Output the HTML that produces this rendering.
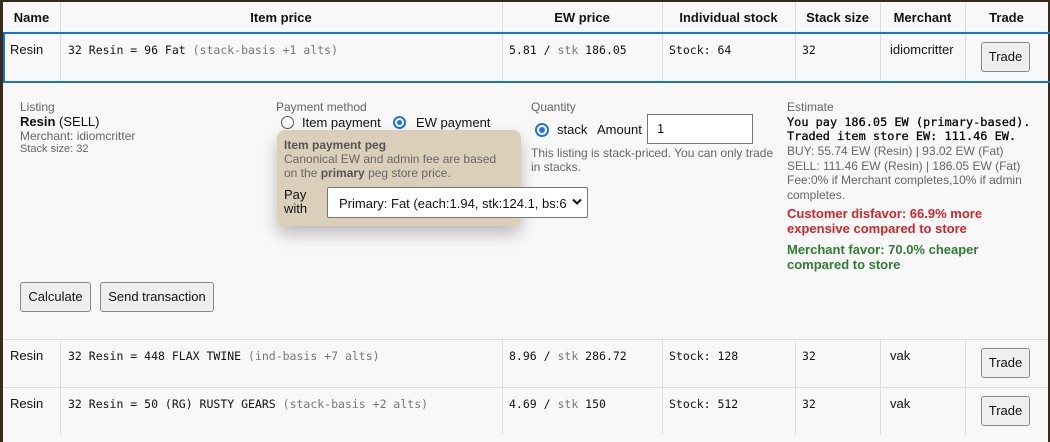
<!DOCTYPE html>
<html><head><style>
*{margin:0;padding:0;box-sizing:border-box}
body{width:1050px;height:435px;overflow:hidden;background:#3a2a18;font-family:"Liberation Sans",Arial,sans-serif;font-size:13px;color:#111;position:relative}
#panel{position:absolute;left:3px;top:2px;width:1045px;height:440px;background:#f8f8f8}
.a{position:absolute;white-space:nowrap}
.m{font-family:"DejaVu Sans Mono",monospace;font-size:11.5px}
.g{color:#777}
.vl{position:absolute;width:1px;background:#dedede}
.hl{position:absolute;height:1px;background:#dedede}
.btn{position:absolute;border:1px solid #8a8a8a;border-radius:3px;background:#efefef;font-size:13px;text-align:center}
.h{font-weight:bold;text-align:center}
.s{color:#666;font-size:12px}
</style></head><body>
<div id="panel"></div>
<div class="a h" style="left:3px;top:10px;width:57px">Name</div>
<div class="a h" style="left:60px;top:10px;width:442px">Item price</div>
<div class="a h" style="left:502px;top:10px;width:160px">EW price</div>
<div class="a h" style="left:662px;top:10px;width:133px">Individual stock</div>
<div class="a h" style="left:795px;top:10px;width:85px">Stack size</div>
<div class="a h" style="left:880px;top:10px;width:85px">Merchant</div>
<div class="a h" style="left:965px;top:10px;width:83px">Trade</div>
<div class="vl" style="left:60px;top:2px;height:81px"></div>
<div class="vl" style="left:502px;top:2px;height:81px"></div>
<div class="vl" style="left:662px;top:2px;height:81px"></div>
<div class="vl" style="left:795px;top:2px;height:81px"></div>
<div class="vl" style="left:880px;top:2px;height:81px"></div>
<div class="vl" style="left:965px;top:2px;height:81px"></div>
<div style="position:absolute;left:3px;top:32px;width:1047px;height:51px;border:2px solid #1a6fd8;border-right:none"></div>
<div class="a" style="left:10px;top:42px">Resin</div>
<div class="a m" style="left:68px;top:43px">32 Resin = 96 Fat <span class="g">(stack-basis +1 alts)</span></div>
<div class="a m" style="left:509px;top:43px">5.81 / <span class="g">stk</span> 186.05</div>
<div class="a m" style="left:669px;top:43px">Stock: 64</div>
<div class="a m" style="left:802px;top:43px">32</div>
<div class="a" style="left:890px;top:42px">idiomcritter</div>
<div class="btn" style="left:981px;top:42px;width:49px;height:30px;line-height:28px">Trade</div>

<div class="a s" style="left:20px;top:100px">Listing</div>
<div class="a" style="left:20px;top:114px"><b>Resin</b> (SELL)</div>
<div class="a s" style="left:20px;top:129px">Merchant: idiomcritter</div>
<div class="a s" style="left:20px;top:143px;font-size:11px">Stack size: 32</div>

<div class="a s" style="left:276px;top:100px">Payment method</div>
<div class="a" style="left:281px;top:116px;width:13px;height:13px;border:1px solid #555;border-radius:50%;background:#fff"></div>
<div class="a" style="left:302px;top:115px">Item payment</div>
<div class="a" style="left:393px;top:116px;width:13px;height:13px;border:2px solid #1a73e8;border-radius:50%;background:#fff"><div style="position:absolute;left:2px;top:2px;width:5px;height:5px;border-radius:50%;background:#1a73e8"></div></div>
<div class="a" style="left:416px;top:115px">EW payment</div>
<div class="a" style="left:277px;top:130px;width:244px;height:96px;border-radius:8px;background:#dccfba;box-shadow:0 8px 16px rgba(0,0,0,0.25)"></div>
<div class="a" style="left:284px;top:138px;font-size:12px;color:#555;font-weight:bold">Item payment peg</div>
<div class="a" style="left:284px;top:152px;font-size:12px;color:#666;line-height:14px">Canonical EW and admin fee are based<br>on the <b style="color:#555">primary</b> peg store price.</div>
<div class="a" style="left:284px;top:188px;line-height:14px">Pay<br>with</div>
<div class="a" style="left:327px;top:187px;width:261px;height:31px;border:1px solid #767676;border-radius:2px;background:#fff;padding:8px 0 0 11px;overflow:hidden"><span style="display:inline-block;width:228px;overflow:hidden">Primary: Fat (each:1.94, stk:124.1, bs:6</span></div>
<svg class="a" style="left:571px;top:197px" width="12" height="10"><path d="M2 2.5 L6 6.5 L10 2.5" stroke="#111" stroke-width="2" fill="none"/></svg>

<div class="a s" style="left:531px;top:100px">Quantity</div>
<div class="a" style="left:535px;top:123px;width:14px;height:14px;border:2px solid #1a73e8;border-radius:50%;background:#fff"><div style="position:absolute;left:2px;top:2px;width:6px;height:6px;border-radius:50%;background:#1a73e8"></div></div>
<div class="a" style="left:557px;top:122px">stack</div>
<div class="a" style="left:597px;top:122px">Amount</div>
<div class="a" style="left:647px;top:114px;width:106px;height:30px;border:1px solid #767676;background:#fff;padding:6px 0 0 9px">1</div>
<div class="a s" style="left:531px;top:146px;line-height:14px">This listing is stack-priced. You can only trade<br>in stacks.</div>

<div class="a s" style="left:787px;top:100px">Estimate</div>
<div class="a m" style="left:787px;top:115px;line-height:14px;color:#000;font-size:11.9px;font-weight:500;-webkit-text-stroke:0.25px #000">You pay 186.05 EW (primary-based).<br>Traded item store EW: 111.46 EW.</div>
<div class="a s" style="left:787px;top:144px;line-height:14.5px">BUY: 55.74 EW (Resin) | 93.02 EW (Fat)<br>SELL: 111.46 EW (Resin) | 186.05 EW (Fat)<br>Fee:0% if Merchant completes,10% if admin<br>completes.</div>
<div class="a" style="left:787px;top:206px;line-height:15px;color:#d0262a;font-weight:bold">Customer disfavor: 66.9% more<br>expensive compared to store</div>
<div class="a" style="left:787px;top:242px;line-height:15px;color:#2e7d32;font-weight:bold">Merchant favor: 70.0% cheaper<br>compared to store</div>

<div class="btn" style="left:20px;top:282px;width:71px;height:30px;line-height:28px">Calculate</div>
<div class="btn" style="left:100px;top:282px;width:114px;height:30px;line-height:28px">Send transaction</div>

<div class="hl" style="left:3px;top:339px;width:1045px"></div>
<div class="hl" style="left:3px;top:387px;width:1045px"></div>
<div class="vl" style="left:60px;top:339px;height:96px"></div>
<div class="vl" style="left:502px;top:339px;height:96px"></div>
<div class="vl" style="left:662px;top:339px;height:96px"></div>
<div class="vl" style="left:795px;top:339px;height:96px"></div>
<div class="vl" style="left:880px;top:339px;height:96px"></div>
<div class="vl" style="left:965px;top:339px;height:96px"></div>

<div class="a" style="left:10px;top:348px">Resin</div>
<div class="a m" style="left:68px;top:349px">32 Resin = 448 FLAX TWINE <span class="g">(ind-basis +7 alts)</span></div>
<div class="a m" style="left:509px;top:349px">8.96 / <span class="g">stk</span> 286.72</div>
<div class="a m" style="left:669px;top:349px">Stock: 128</div>
<div class="a m" style="left:802px;top:349px">32</div>
<div class="a" style="left:890px;top:348px">vak</div>
<div class="btn" style="left:981px;top:348px;width:49px;height:30px;line-height:28px">Trade</div>

<div class="a" style="left:10px;top:396px">Resin</div>
<div class="a m" style="left:68px;top:397px">32 Resin = 50 (RG) RUSTY GEARS <span class="g">(stack-basis +2 alts)</span></div>
<div class="a m" style="left:509px;top:397px">4.69 / <span class="g">stk</span> 150</div>
<div class="a m" style="left:669px;top:397px">Stock: 512</div>
<div class="a m" style="left:802px;top:397px">32</div>
<div class="a" style="left:890px;top:396px">vak</div>
<div class="btn" style="left:981px;top:396px;width:49px;height:30px;line-height:28px">Trade</div>
</body></html>
